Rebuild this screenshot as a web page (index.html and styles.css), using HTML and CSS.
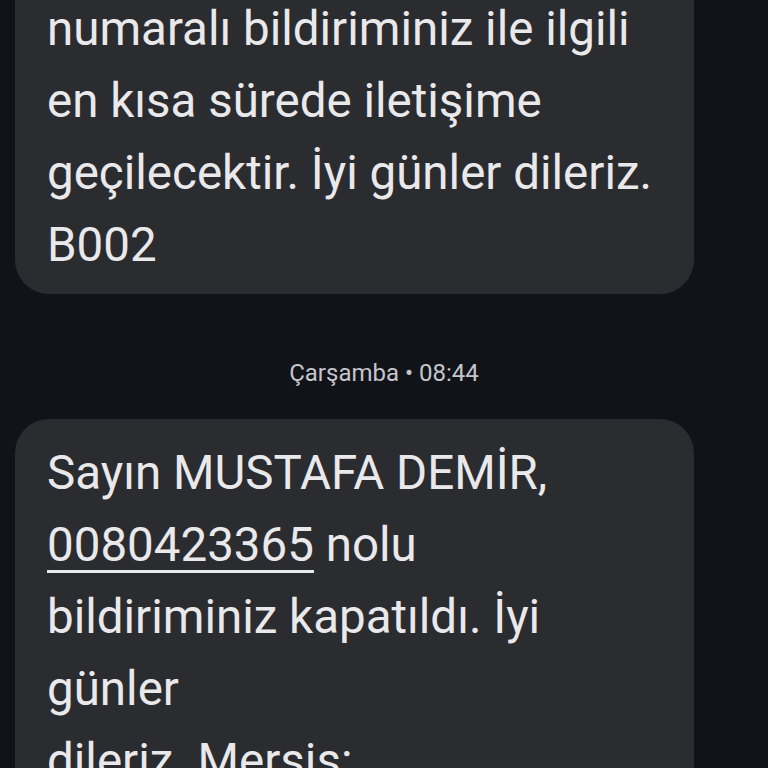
FILE: index.html
```html
<!DOCTYPE html>
<html lang="tr">
<head>
<meta charset="utf-8">
<title>Mesajlar</title>
<link rel="stylesheet" href="styles.css">
</head>
<body>
<main class="thread">
  <div class="bubble bubble-first">
    <p class="msg">numaralı bildiriminiz ile ilgili<br>en kısa sürede iletişime<br>geçilecektir. İyi günler dileriz.<br>B002</p>
  </div>
  <div class="stamp">Çarşamba • 08:44</div>
  <div class="bubble bubble-last">
    <p class="msg">Sayın MUSTAFA DEMİR,<br><span class="link">0080423365</span> nolu<br>bildiriminiz kapatıldı. İyi<br>günler<br>dileriz. Mersis:</p>
  </div>
</main>
</body>
</html>
```

FILE: styles.css
```css
html, body {
  margin: 0;
  padding: 0;
  height: 100%;
  overflow: hidden;
  background: #111319;
}

body {
  font-family: Roboto, "Noto Sans", "Liberation Sans", sans-serif;
  color: #e9e9eb;
}

.thread {
  display: flex;
  flex-direction: column;
  align-items: flex-start;
  margin-top: -47px;
  padding-left: 15px;
}

.bubble {
  box-sizing: border-box;
  width: 679px;
  background: #2b2c30;
  border-radius: 34px;
  padding: 16px 30px 14px 32px;
}

.bubble-first {
  padding-top: 40px;
  padding-bottom: 13px;
}

.bubble-last {
  padding-top: 18px;
  padding-bottom: 120px;
}

.msg {
  margin: 0;
  font-size: 47.5px;
  line-height: 72px;
  font-weight: 400;
  white-space: nowrap;
}

.link {
  text-decoration: underline;
  text-decoration-thickness: 3px;
  text-underline-offset: 9px;
}

.stamp {
  align-self: stretch;
  margin: 63px 15px 30px 0;
  text-align: center;
  font-size: 24px;
  line-height: 32px;
  color: #c4c6cc;
}
```
